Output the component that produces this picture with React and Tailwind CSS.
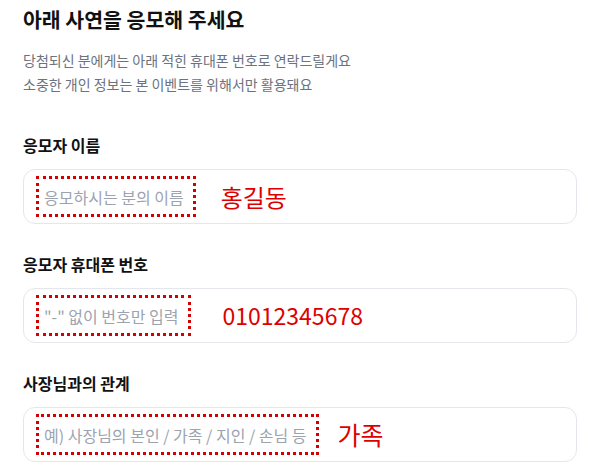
import React from 'react';

const fields = [
  { label: '응모자 이름', placeholder: '응모하시는 분의 이름', value: '홍길동', gap: 'ml-[25px]', size: 'text-[24px]' },
  { label: '응모자 휴대폰 번호', placeholder: '"-" 없이 번호만 입력', value: '01012345678', gap: 'ml-[32px]', size: 'text-[23px]' },
  { label: '사장님과의 관계', placeholder: '예) 사장님의 본인 / 가족 / 지인 / 손님 등', value: '가족', gap: 'ml-[19px]', size: 'text-[25px]' },
];

const Field = ({ label, placeholder, value, gap, size }) => (
  <div>
    <label className="block text-[16px] font-bold leading-[24px] text-[#111]">{label}</label>
    <div className="mt-[12px] flex h-[55px] items-center rounded-xl border border-[#e3e7ec] bg-white pl-[12px]">
      <span className="flex h-[41px] items-center border-[3px] border-dotted border-[#d40000] pl-[5px] pr-[9px] text-[16px] text-[#9ca3af]">
        {placeholder}
      </span>
      <span className={`${gap} ${size} leading-none text-[#dd0000]`}>{value}</span>
    </div>
  </div>
);

const App = () => {
  return (
    <div className="h-[473px] w-[600px] overflow-hidden bg-white px-[23px] font-['Noto_Sans_CJK_KR','Noto_Sans',sans-serif]">
      <h1 className="pt-[5px] text-[20.5px] font-bold leading-[28px] text-[#111]">아래 사연을 응모해 주세요</h1>
      <p className="mt-[15px] text-[14px] leading-[24px] text-[#6b7280]">
        당첨되신 분에게는 아래 적힌 휴대폰 번호로 연락드릴게요
        <br />
        소중한 개인 정보는 본 이벤트를 위해서만 활용돼요
      </p>
      <div className="mt-[37px] flex flex-col gap-[28px]">
        {fields.map((f) => (
          <Field key={f.label} {...f} />
        ))}
      </div>
    </div>
  );
};

export default App;
